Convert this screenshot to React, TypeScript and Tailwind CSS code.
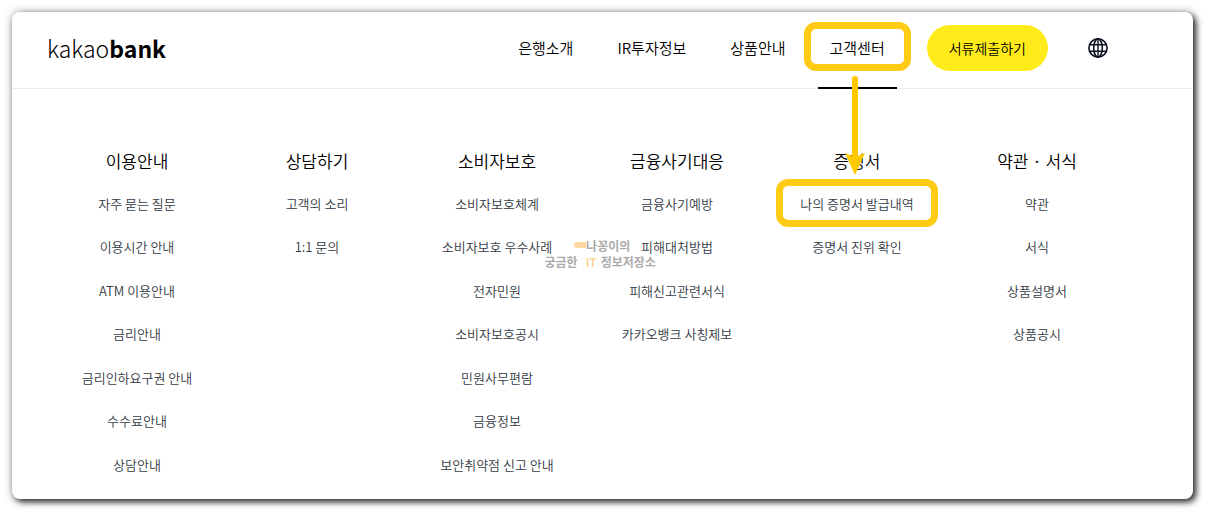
type Column = { title: string; links: string[] };

const navItems = ["은행소개", "IR투자정보", "상품안내", "고객센터"];
const activeNav = "고객센터";
const highlightedLink = "나의 증명서 발급내역";

const columns: Column[] = [
  {
    title: "이용안내",
    links: ["자주 묻는 질문", "이용시간 안내", "ATM 이용안내", "금리안내", "금리인하요구권 안내", "수수료안내", "상담안내"],
  },
  { title: "상담하기", links: ["고객의 소리", "1:1 문의"] },
  {
    title: "소비자보호",
    links: ["소비자보호체계", "소비자보호 우수사례", "전자민원", "소비자보호공시", "민원사무편람", "금융정보", "보안취약점 신고 안내"],
  },
  { title: "금융사기대응", links: ["금융사기예방", "피해대처방법", "피해신고관련서식", "카카오뱅크 사칭제보"] },
  { title: "증명서", links: [highlightedLink, "증명서 진위 확인"] },
  { title: "약관 · 서식", links: ["약관", "서식", "상품설명서", "상품공시"] },
];

function GlobeIcon() {
  return (
    <svg viewBox="0 0 20 20" className="size-5" fill="none" stroke="#0b1320" strokeWidth="1.6" aria-hidden="true">
      <circle cx="10" cy="10" r="9.1" />
      <ellipse cx="10" cy="10" rx="4.3" ry="9.1" />
      <path d="M10 1v18M2 6.8h16M2 13.2h16" strokeWidth="1.4" />
    </svg>
  );
}

function Arrow() {
  return (
    <svg
      viewBox="0 0 20 100"
      className="pointer-events-none absolute top-16 left-1/2 z-10 h-[100px] w-5 -translate-x-3"
      aria-hidden="true"
    >
      <path d="M10 3v82" stroke="#ffc800" strokeWidth="6" strokeLinecap="round" />
      <path d="M0 77l10 4 10-4-10 22z" fill="#ffc800" />
    </svg>
  );
}

function Header() {
  return (
    <header className="flex h-[77px] items-stretch border-b border-[#ececec] pr-[85px] pl-[35px]">
      <a href="#home" className="mr-auto flex items-center pb-1 text-[23px] leading-8 font-light text-black">
        kakao<b className="font-bold">bank</b>
      </a>
      <nav className="flex items-stretch gap-5 text-[15px] text-black" aria-label="주요 메뉴">
        {navItems.map((item) => (
          <a key={item} href="#menu" className="relative flex items-center px-3 pb-1">
            {item}
            {item === activeNav && (
              <>
                <span className="absolute inset-x-0 -bottom-px h-0.5 bg-black" />
                <span className="absolute -inset-x-3.5 top-2.5 h-[49px] rounded-xl border-[7px] border-[#ffcb15]" />
                <Arrow />
              </>
            )}
          </a>
        ))}
      </nav>
      <button type="button" className="mb-1 ml-[30px] h-[46px] self-center rounded-full bg-[#ffeb1a] px-[22px] text-[14px] text-black">
        서류제출하기
      </button>
      <button type="button" className="mb-1 ml-10 self-center" aria-label="Language">
        <GlobeIcon />
      </button>
    </header>
  );
}

function MenuColumn({ title, links }: Column) {
  return (
    <section className="text-center">
      <h2 className="text-[17px] leading-6 text-black">{title}</h2>
      <ul className="mt-[21px] text-[13px] leading-5 text-[#333a44]">
        {links.map((link) => (
          <li key={link} className="odd:mb-[23px] even:mb-6">
            <a href="#link" className="relative inline-block">
              {link}
              {link === highlightedLink && (
                <span className="absolute -inset-x-6 -top-[15px] -bottom-[13px] rounded-xl border-[7px] border-[#ffcb15]" />
              )}
            </a>
          </li>
        ))}
      </ul>
    </section>
  );
}

function Watermark() {
  return (
    <div className="pointer-events-none absolute top-[226px] left-1/2 -translate-x-[58px] text-center text-[12px] leading-4 font-bold text-[#aaaaaa]">
      <p className="flex justify-center pl-1">
        <span className="mt-1 h-1.5 w-3 rounded-l-full bg-[#ffd9a0]" />
        나꽁이의
      </p>
      <p className="flex gap-1">
        <span>궁금한</span>
        <span className="pl-1 font-medium text-[#ffd08a]">IT</span>
        <span>정보저장소</span>
      </p>
    </div>
  );
}

export default function App() {
  return (
    <div className="bg-white pt-3 pr-4 pb-4 pl-3 font-['Noto_Sans_CJK_KR',sans-serif] font-[350]">
      <main className="relative rounded-lg bg-white shadow-[3px_3px_6px_rgba(0,0,0,0.8),0_0_10px_rgba(0,0,0,0.3)]">
        <Header />
        <div className="grid grid-cols-6 pt-[60px] pr-[66px] pb-px pl-[35px]">
          {columns.map((column) => (
            <MenuColumn key={column.title} {...column} />
          ))}
        </div>
        <Watermark />
      </main>
    </div>
  );
}
